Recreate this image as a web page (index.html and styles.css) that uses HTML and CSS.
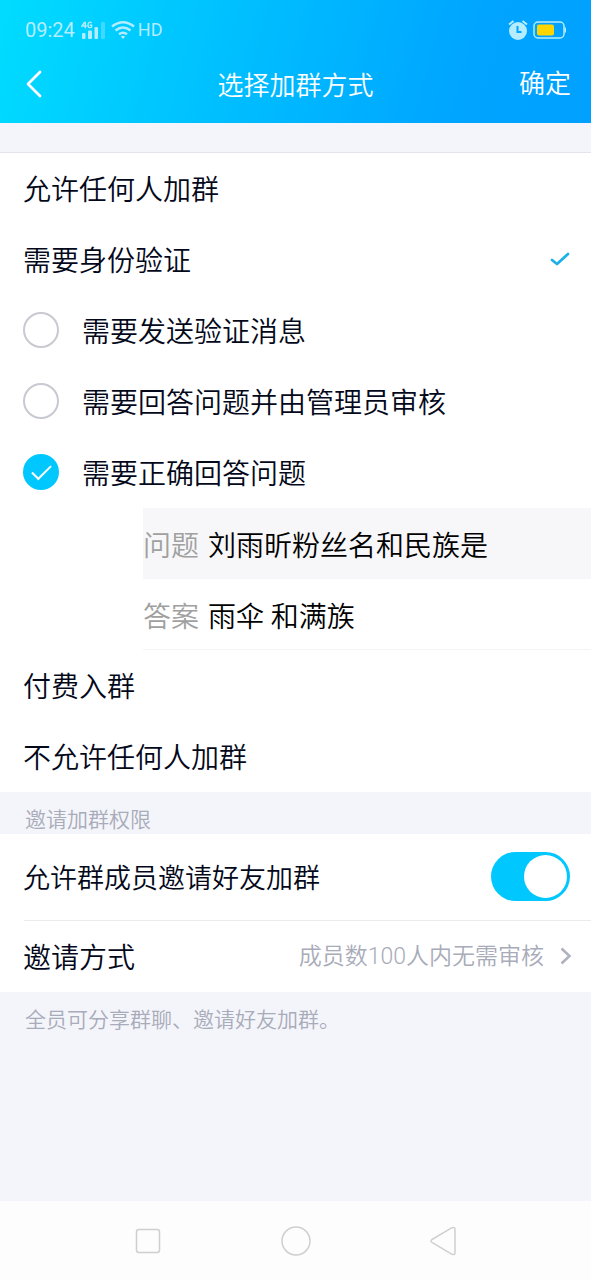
FILE: index.html
```html
<!DOCTYPE html>
<html lang="zh-CN">
<head>
<meta charset="utf-8">
<meta name="viewport" content="width=device-width, initial-scale=1">
<title>选择加群方式</title>
<link rel="stylesheet" href="styles.css">
</head>
<body>
<header class="top">
  <div class="status">
    <span class="clock">09:24</span>
    <svg class="signal" width="24" height="18" viewBox="0 0 24 18" fill="currentColor" aria-label="4G">
      <path d="M3.800.800 1 5h4.800M4.300.800v6.400M10.600 2Q9.500.800 8.300 1.300Q7 1.800 7 4Q7 6.600 8.800 6.600Q10.300 6.600 10.600 6V4.300H8.800" fill="none" stroke="currentColor" stroke-width="1.400"/>
      <rect x="1" y="12" width="3.500" height="6" rx="1"/>
      <rect x="7" y="9.500" width="4" height="8.500" rx="1"/>
      <rect x="13.500" y="6" width="3.500" height="12" rx="1"/>
      <rect x="20" y="1" width="4" height="17" rx="1" opacity=".35"/>
    </svg>
    <svg class="wifi" width="24" height="18" viewBox="0 0 24 18" fill="none" stroke="currentColor" stroke-width="2.400" aria-label="Wi-Fi">
      <path d="M1 5.500Q12-3 23 5.500M4.500 9.500Q12 3.500 19.500 9.500M8 13.300Q12 10 16 13.300"/>
      <path d="M9.800 15.500Q12 14 14.200 15.500L12 18Z" fill="currentColor" stroke="none"/>
    </svg>
    <span class="hd">HD</span>
    <svg class="alarm" width="20" height="20" viewBox="0 0 20 20" aria-label="闹钟">
      <circle cx="10" cy="11" r="9" fill="currentColor"/>
      <path d="M1 4.500 5.500 1M19 4.500 14.500 1" fill="none" stroke="currentColor" stroke-width="2"/>
      <path d="M9.500 6v6h4" fill="none" stroke="#00a5ff" stroke-width="2"/>
    </svg>
    <svg class="battery" width="33" height="18" viewBox="0 0 33 18" aria-label="电量">
      <rect x="1" y="1" width="30" height="16" rx="4" fill="none" stroke="currentColor" stroke-width="1.500"/>
      <path d="M31.500 6.500h1.500v5h-1.500z" fill="currentColor"/>
      <rect x="4" y="3.500" width="17" height="11" rx="2" fill="#ffd500"/>
    </svg>
  </div>
  <nav class="bar">
    <button class="back" type="button" aria-label="返回">
      <svg width="18" height="28" viewBox="0 0 18 28" fill="none" stroke="currentColor" stroke-width="2.800" stroke-linecap="round" stroke-linejoin="round"><path d="M16 2 4 14l12 12"/></svg>
    </button>
    <h1 class="title">选择加群方式</h1>
    <button class="done" type="button">确定</button>
  </nav>
</header>
<main class="content">
  <form class="group options">
    <label class="row"><input class="mode" type="radio" name="mode"><span>允许任何人加群</span></label>
    <label class="row"><input class="mode" type="radio" name="mode" checked><span>需要身份验证</span>
      <svg class="tick" width="20" height="14" viewBox="0 0 20 14" fill="none" stroke="#1fb0ea" stroke-width="2.800" stroke-linecap="round" stroke-linejoin="round"><path d="M2 8l5 4L18 2"/></svg>
    </label>
    <label class="row sub"><input class="dot" type="radio" name="verify"><span>需要发送验证消息</span></label>
    <label class="row sub"><input class="dot" type="radio" name="verify"><span>需要回答问题并由管理员审核</span></label>
    <label class="row sub"><input class="dot" type="radio" name="verify" checked><span>需要正确回答问题</span></label>
    <div class="qa question"><label for="question">问题</label><input id="question" type="text" value="刘雨昕粉丝名和民族是"></div>
    <div class="qa answer"><label for="answer">答案</label><input id="answer" type="text" value="雨伞 和满族"></div>
    <label class="row"><input class="mode" type="radio" name="mode"><span>付费入群</span></label>
    <label class="row"><input class="mode" type="radio" name="mode"><span>不允许任何人加群</span></label>
  </form>
  <h2 class="caption">邀请加群权限</h2>
  <section class="group">
    <label class="row tall"><span>允许群成员邀请好友加群</span><input class="switch" type="checkbox" role="switch" checked></label>
    <div class="divider"></div>
    <button class="row link" type="button"><span>邀请方式</span><span class="value">成员数100人内无需审核</span>
      <svg width="12" height="18" viewBox="0 0 12 18" fill="none" stroke="#b0b2bf" stroke-width="2.600"><path d="M1.500 1.500 9.500 9l-8 7.500"/></svg>
    </button>
  </section>
  <p class="note">全员可分享群聊、邀请好友加群。</p>
</main>
<footer class="system">
  <button type="button" aria-label="最近任务"><svg width="30" height="30" viewBox="0 0 30 30"><rect x="3.500" y="3.500" width="23" height="23" rx="2.500"/></svg></button>
  <button type="button" aria-label="主页"><svg width="30" height="30" viewBox="0 0 30 30"><circle cx="15" cy="15" r="14"/></svg></button>
  <button type="button" aria-label="返回"><svg width="30" height="30" viewBox="0 0 30 30"><path d="M4 13.500 24 1.700q3-1 3 1.500v23.600q0 2.500-3 1.500L4 16.500q-2-1.500 0-3z"/></svg></button>
</footer>
</body>
</html>
```
FILE: styles.css
```css
* { box-sizing: border-box; }
body {
  margin: 0;
  min-height: 100vh;
  display: flex;
  flex-direction: column;
  background: #f4f5fa;
  color: #03081a;
  font-family: Roboto, "Noto Sans CJK SC DemiLight", "Noto Sans CJK SC", sans-serif;
  font-size: 28px;
  font-weight: 300;
}
button, input { font: inherit; color: inherit; margin: 0; padding: 0; border: 0; background: none; }
input { appearance: none; }
svg { display: block; flex: none; }

.top { background: linear-gradient(105deg, #00dcff 0%, #00c0ff 38%, #00a5ff 78%, #00a0ff 100%); color: #fff; }
.status { display: flex; align-items: center; height: 48px; padding: 12px 25px 0; color: #b5ecff; font-size: 20px; line-height: 24px; font-weight: 400; }
.signal { margin-left: 6px; }
.wifi { margin-left: 6px; }
.hd { margin-left: 3px; font-size: 18px; }
.alarm { margin-left: auto; }
.battery { margin-left: 5px; }
.bar { display: grid; grid-template-columns: 1fr auto 1fr; align-items: center; height: 75px; padding: 0 20px 4px 24px; font-size: 26px; }
.back { justify-self: start; }
.title { margin: 0; padding-right: 4px; font-size: 26px; font-weight: inherit; }
.done { justify-self: end; padding-bottom: 4px; }

.content { flex: 1; padding-top: 29px; }
.group { display: block; background: #fff; }
.options { border-top: 1px solid #e4e5ea; }
.row { display: flex; align-items: center; width: 100%; height: 71px; padding: 0 21px 1px 23px; text-align: left; }
.mode { width: 0; height: 0; }
.tick { margin-left: auto; }
.sub { gap: 23px; }
.dot { flex: none; width: 36px; height: 36px; border: 2px solid #c8c9d1; border-radius: 50%; }
.dot:checked { border: 0; background: #00c8ff; display: grid; place-items: center; }
.dot:checked::before { content: ""; width: 17px; height: 8px; margin-bottom: 5px; border: solid #fff; border-width: 0 0 2px 2px; transform: rotate(-45deg); }
.qa { display: flex; align-items: center; gap: 9px; height: 71px; margin-left: 143px; padding-top: 2px; border-bottom: 1px solid #f5f5f7; color: #000; }
.qa label { color: #a0a0a0; }
.qa input { flex: 1; min-width: 0; }
.question { background: #f7f7fa; }

.caption, .note { margin: 0; padding: 14px 25px 0; color: #a8abb9; font-size: 21px; line-height: 29px; font-weight: inherit; }
.caption { height: 42px; }
.tall { height: 86px; font-size: 27px; }
.divider { height: 1px; margin-left: 24px; background: #ebebee; }
.switch { display: flex; justify-content: flex-end; width: 79px; height: 49px; margin-left: auto; padding: 3px; border-radius: 25px; background: #00c8ff; }
.switch::before { content: ""; width: 43px; height: 43px; border-radius: 50%; background: #fff; }
.switch:not(:checked) { justify-content: flex-start; background: #d5d6dc; }
.link { padding-right: 19px; }
.value { margin: 0 16px 0 auto; padding-bottom: 5px; color: #a8abb9; font-size: 23px; }

.system { display: flex; justify-content: space-between; align-items: center; height: 79px; padding: 0 133px; background: #fdfdfd; }
.system svg { fill: none; stroke: #cfcfcf; stroke-width: 1.500px; }
```
